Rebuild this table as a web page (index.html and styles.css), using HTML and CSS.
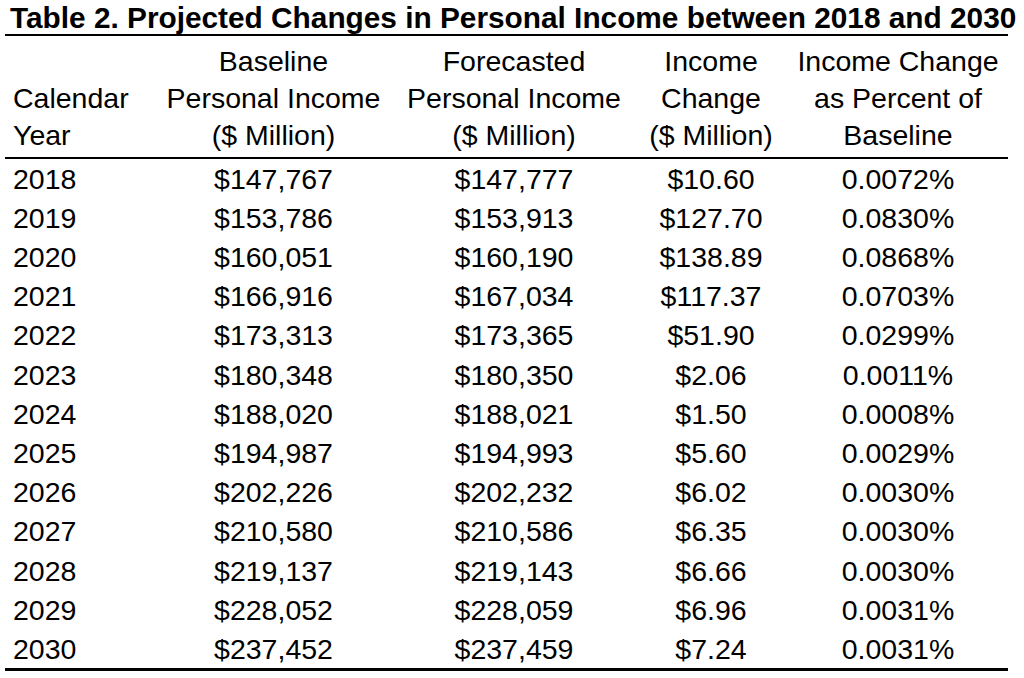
FILE: index.html
```html
<!DOCTYPE html>
<html>
<head>
<meta charset="utf-8">
<link rel="stylesheet" href="styles.css">
</head>
<body>
<div class="title">Table 2. Projected Changes in Personal Income between 2018 and 2030</div>
<table class="data">
  <colgroup>
    <col class="c1"><col class="c2"><col class="c3"><col class="c4"><col class="c5">
  </colgroup>
  <thead>
    <tr>
      <th class="left">Calendar<br>Year</th>
      <th>Baseline<br>Personal Income<br>($ Million)</th>
      <th>Forecasted<br>Personal Income<br>($ Million)</th>
      <th>Income<br>Change<br>($ Million)</th>
      <th>Income Change<br>as Percent of<br>Baseline</th>
    </tr>
  </thead>
  <tbody>
    <tr><td class="left">2018</td><td>$147,767</td><td>$147,777</td><td>$10.60</td><td>0.0072%</td></tr>
    <tr><td class="left">2019</td><td>$153,786</td><td>$153,913</td><td>$127.70</td><td>0.0830%</td></tr>
    <tr><td class="left">2020</td><td>$160,051</td><td>$160,190</td><td>$138.89</td><td>0.0868%</td></tr>
    <tr><td class="left">2021</td><td>$166,916</td><td>$167,034</td><td>$117.37</td><td>0.0703%</td></tr>
    <tr><td class="left">2022</td><td>$173,313</td><td>$173,365</td><td>$51.90</td><td>0.0299%</td></tr>
    <tr><td class="left">2023</td><td>$180,348</td><td>$180,350</td><td>$2.06</td><td>0.0011%</td></tr>
    <tr><td class="left">2024</td><td>$188,020</td><td>$188,021</td><td>$1.50</td><td>0.0008%</td></tr>
    <tr><td class="left">2025</td><td>$194,987</td><td>$194,993</td><td>$5.60</td><td>0.0029%</td></tr>
    <tr><td class="left">2026</td><td>$202,226</td><td>$202,232</td><td>$6.02</td><td>0.0030%</td></tr>
    <tr><td class="left">2027</td><td>$210,580</td><td>$210,586</td><td>$6.35</td><td>0.0030%</td></tr>
    <tr><td class="left">2028</td><td>$219,137</td><td>$219,143</td><td>$6.66</td><td>0.0030%</td></tr>
    <tr><td class="left">2029</td><td>$228,052</td><td>$228,059</td><td>$6.96</td><td>0.0031%</td></tr>
    <tr class="last"><td class="left">2030</td><td>$237,452</td><td>$237,459</td><td>$7.24</td><td>0.0031%</td></tr>
  </tbody>
</table>
</body>
</html>
```

FILE: styles.css
```css
html, body {
  margin: 0;
  padding: 0;
  background: #ffffff;
  color: #000000;
  font-family: "Liberation Sans", Arial, Helvetica, sans-serif;
}

.title {
  font-weight: bold;
  font-size: 29.8px;
  line-height: 33px;
  height: 33px;
  padding: 1px 0 0 10px;
  white-space: nowrap;
}

.data {
  margin-left: 5px;
  width: 1003px;
  table-layout: fixed;
  border-collapse: separate;
  border-spacing: 0;
  font-size: 28.5px;
}

.c1 { width: 148px; }
.c2 { width: 241px; }
.c3 { width: 240px; }
.c4 { width: 154px; }
.c5 { width: 220px; }

.data th {
  font-weight: normal;
  text-align: center;
  vertical-align: bottom;
  line-height: 36.7px;
  padding: 7.45px 0 3px 0;
  border-top: 2px solid #000;
  border-bottom: 2px solid #000;
  white-space: nowrap;
}

.data td {
  text-align: center;
  line-height: 37.2px;
  padding: 2px 0 0 0;
  white-space: nowrap;
}

.data .left {
  text-align: left;
  padding-left: 8px;
}

.data tr.last td {
  border-bottom: 3px solid #000;
}
```
